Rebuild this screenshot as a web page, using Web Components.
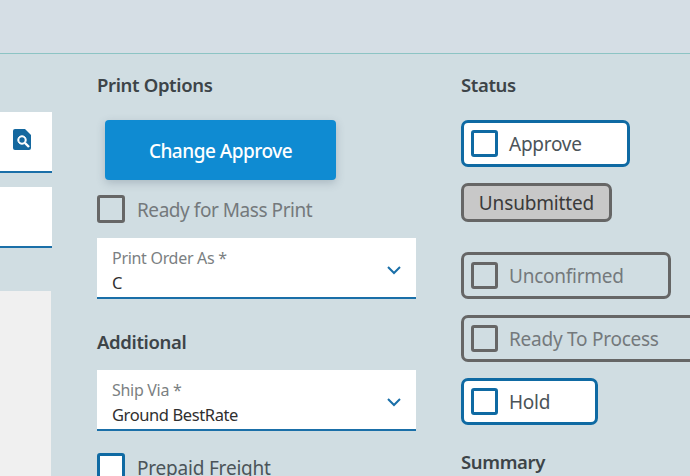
<!DOCTYPE html>
<html>
<head>
<meta charset="utf-8">
<style>
html, body { margin: 0; height: 476px; overflow: hidden; background: #d0dde2; font-family: "Noto Sans", "Open Sans", sans-serif; color: #3c3c3c; }
</style>
</head>
<body>
<app-page></app-page>
<script>
class SectionTitle extends HTMLElement {
	constructor() {
		super();
		this.attachShadow({mode: 'open'}).innerHTML = `
<style>
	:host { display: block; font-size: 18.5px; line-height: 26px; height: 26px; font-weight: 600; color: #3d4448; letter-spacing: -.35px; white-space: nowrap; }
</style>
<slot></slot>`;
	}
}

class CheckBox extends HTMLElement {
	constructor() {
		super();
		this.attachShadow({mode: 'open'}).innerHTML = `
<style>
	:host { display: flex; align-items: center; gap: 12px; font-size: 19px; letter-spacing: -.45px; color: #74797c; white-space: nowrap; }
	.box { width: 28px; height: 28px; box-sizing: border-box; border: 3px solid #666; border-radius: 3px; flex: none; }
	:host([active]) { color: #4b5459; letter-spacing: -.2px; }
	:host([active]) .box { border-color: #0f6aa3; background: #fff; }
	.txt { padding-top: 2px; }
</style>
<span class="box"></span><span class="txt"><slot></slot></span>`;
	}
}

class StatusToggle extends HTMLElement {
	constructor() {
		super();
		this.attachShadow({mode: 'open'}).innerHTML = `
<style>
	:host { display: flex; align-items: center; gap: 11px; box-sizing: border-box; height: 47px; padding: 0 7px; border: 3px solid #666; border-radius: 7px; font-size: 19px; letter-spacing: -.25px; color: #74797c; white-space: nowrap; }
	.box { width: 27px; height: 27px; box-sizing: border-box; border: 3px solid #666; border-radius: 3px; flex: none; }
	:host([active]) { border-color: #0f6aa3; background: #fff; color: #4b5459; }
	:host([active]) .box { border-color: #0f6aa3; }
</style>
<span class="box"></span><slot></slot>`;
	}
}

class SelectField extends HTMLElement {
	constructor() {
		super();
		this.attachShadow({mode: 'open'}).innerHTML = `
<style>
	:host { display: flex; align-items: center; box-sizing: border-box; height: 61px; padding: 5px 15px 0 15px; background: #fff; border-bottom: 2px solid #1a6fa8; }
	.txt { flex: 1; }
	.lbl { font-size: 16px; line-height: 25px; letter-spacing: -.3px; color: #7b7f82; white-space: nowrap; }
	.val { font-size: 16.5px; line-height: 24px; letter-spacing: -.4px; color: #2f2f2f; white-space: nowrap; }
	svg { width: 14px; height: 9px; }
</style>
<div class="txt"><div class="lbl"></div><div class="val"><slot></slot></div></div>
<svg viewBox="0 0 14 9" fill="none" stroke="#1a6fa8" stroke-width="2"><path d="M1 1l6 6 6-6"/></svg>`;
		this.shadowRoot.querySelector('.lbl').textContent = this.getAttribute('label');
	}
}

class LeftRail extends HTMLElement {
	constructor() {
		super();
		this.attachShadow({mode: 'open'}).innerHTML = `
<style>
	:host { display: block; width: 52px; flex: none; padding-top: 58px; }
	.field { height: 61px; box-sizing: border-box; background: #fff; border-bottom: 2px solid #1a6fa8; display: flex; align-items: center; justify-content: flex-end; padding: 0 20px 4px 0; }
	.field + .field { margin-top: 14px; }
	.pane { margin-top: 43px; height: 185px; width: 51px; background: #f0f0f0; }
	svg { width: 20px; height: 23px; }
</style>
<div class="field">
	<svg viewBox="0 0 20 23"><path fill="#14689f" d="M3 1h10l6 6v13a2 2 0 0 1-2 2H3a2 2 0 0 1-2-2V3a2 2 0 0 1 2-2z"/><circle cx="10" cy="12" r="4.2" fill="#fff" stroke="#fff" stroke-width="1"/><circle cx="10" cy="12" r="2.7" fill="#14689f"/><path d="M13 15l4 4" stroke="#fff" stroke-width="2.4"/></svg>
</div>
<div class="field"></div>
<div class="pane"></div>`;
	}
}

class PrintColumn extends HTMLElement {
	constructor() {
		super();
		this.attachShadow({mode: 'open'}).innerHTML = `
<style>
	:host { display: block; width: 319px; flex: none; margin-left: 45px; padding-top: 18px; }
	button { display: block; width: 231px; height: 60px; margin: 22px 0 0 8px; border: 0; border-radius: 4px; background: #0f8bd2; color: #fff; font: 500 19px "Noto Sans", sans-serif; letter-spacing: -.5px; box-shadow: 0 3px 8px rgba(60,80,100,.25); padding: 2px 0 0; }
	check-box { margin-top: 15px; }
	select-field { margin-top: 15px; }
	.add { margin-top: 30px; }
	.ship { margin-top: 15px; }
	.pre { margin-top: 22px; }
</style>
<section-title>Print Options</section-title>
<button>Change Approve</button>
<check-box>Ready for Mass Print</check-box>
<select-field label="Print Order As *">C</select-field>
<section-title class="add">Additional</section-title>
<select-field class="ship" label="Ship Via *">Ground BestRate</select-field>
<check-box class="pre" active>Prepaid Freight</check-box>`;
	}
}

class StatusColumn extends HTMLElement {
	constructor() {
		super();
		this.attachShadow({mode: 'open'}).innerHTML = `
<style>
	:host { display: block; flex: none; margin-left: 45px; padding-top: 18px; }
	.approve { width: 169px; margin-top: 22px; }
	.badge { display: flex; align-items: center; justify-content: center; box-sizing: border-box; width: 151px; height: 39px; margin-top: 16px; background: #c8c8c8; border: 3px solid #666; border-radius: 7px; font-size: 19px; letter-spacing: -.15px; color: #3a3a3a; white-space: nowrap; }
	.unc { width: 210px; margin-top: 30px; }
	.rdy { width: 240px; margin-top: 16px; }
	.hold { width: 137px; margin-top: 16px; }
	.sum { margin-top: 24px; }
</style>
<section-title>Status</section-title>
<status-toggle class="approve" active>Approve</status-toggle>
<div class="badge">Unsubmitted</div>
<status-toggle class="unc">Unconfirmed</status-toggle>
<status-toggle class="rdy">Ready To Process</status-toggle>
<status-toggle class="hold" active>Hold</status-toggle>
<section-title class="sum">Summary</section-title>`;
	}
}

class AppPage extends HTMLElement {
	constructor() {
		super();
		this.attachShadow({mode: 'open'}).innerHTML = `
<style>
	:host { display: block; }
	header { height: 53px; background: #d5dee5; border-bottom: 1px solid #8cc4c4; }
	main { display: flex; }
</style>
<header></header>
<main>
	<left-rail></left-rail>
	<print-column></print-column>
	<status-column></status-column>
</main>`;
	}
}

customElements.define('section-title', SectionTitle);
customElements.define('check-box', CheckBox);
customElements.define('status-toggle', StatusToggle);
customElements.define('select-field', SelectField);
customElements.define('left-rail', LeftRail);
customElements.define('print-column', PrintColumn);
customElements.define('status-column', StatusColumn);
customElements.define('app-page', AppPage);
</script>
</body>
</html>
